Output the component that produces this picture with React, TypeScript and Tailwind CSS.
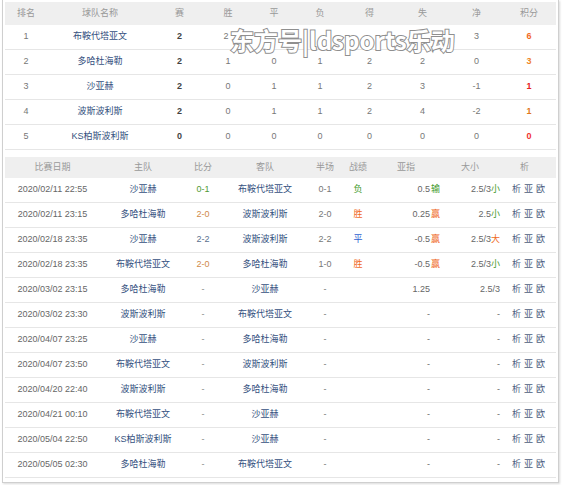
import React from "react";

const FONT = { fontFamily: '"Liberation Sans","Noto Sans CJK SC",sans-serif' };

const standings = [
  { r: "1", n: "布鞍代塔亚文", p: "2", w: "2", d: "", l: "", f: "", a: "", g: "3", pts: "6", pc: "text-[#f26a1f]" },
  { r: "2", n: "多哈杜海勒", p: "2", w: "1", d: "0", l: "1", f: "2", a: "2", g: "0", pts: "3", pc: "text-[#f0842a]" },
  { r: "3", n: "沙亚赫", p: "2", w: "0", d: "1", l: "1", f: "2", a: "3", g: "-1", pts: "1", pc: "text-[#e52222]" },
  { r: "4", n: "波斯波利斯", p: "2", w: "0", d: "1", l: "1", f: "2", a: "4", g: "-2", pts: "1", pc: "text-[#e0761e]" },
  { r: "5", n: "KS柏斯波利斯", p: "0", w: "0", d: "0", l: "0", f: "0", a: "0", g: "0", pts: "0", pc: "text-[#f03232]" },
];

type M = {
  date: string; home: string; score: string; sc: string; away: string; half: string;
  res?: string; rc?: string; hcp: string; hr?: string; hrc?: string; ou: string; our?: string; ourc?: string;
};

const G = "text-[#3f9a2c]";
const O = "text-[#ef6a1e]";

const matches: M[] = [
  { date: "2020/02/11 22:55", home: "沙亚赫", score: "0-1", sc: "text-[#4f9a35]", away: "布鞍代塔亚文", half: "0-1", res: "负", rc: G, hcp: "0.5", hr: "输", hrc: G, ou: "2.5/3", our: "小", ourc: G },
  { date: "2020/02/11 23:15", home: "多哈杜海勒", score: "2-0", sc: "text-[#d0894a]", away: "波斯波利斯", half: "2-0", res: "胜", rc: O, hcp: "0.25", hr: "赢", hrc: O, ou: "2.5", our: "小", ourc: G },
  { date: "2020/02/18 23:35", home: "沙亚赫", score: "2-2", sc: "text-[#5b6f8f]", away: "波斯波利斯", half: "2-2", res: "平", rc: "text-[#2f5fd0]", hcp: "-0.5", hr: "赢", hrc: O, ou: "2.5/3", our: "大", ourc: O },
  { date: "2020/02/18 23:35", home: "布鞍代塔亚文", score: "2-0", sc: "text-[#d0894a]", away: "多哈杜海勒", half: "1-0", res: "胜", rc: O, hcp: "-0.5", hr: "赢", hrc: O, ou: "2.5/3", our: "小", ourc: G },
  { date: "2020/03/02 23:15", home: "多哈杜海勒", score: "-", sc: "text-[#888]", away: "沙亚赫", half: "-", hcp: "1.25", ou: "2.5/3" },
  { date: "2020/03/02 23:30", home: "波斯波利斯", score: "-", sc: "text-[#888]", away: "布鞍代塔亚文", half: "-", hcp: "-", ou: "-" },
  { date: "2020/04/07 23:25", home: "沙亚赫", score: "-", sc: "text-[#888]", away: "多哈杜海勒", half: "-", hcp: "-", ou: "-" },
  { date: "2020/04/07 23:50", home: "布鞍代塔亚文", score: "-", sc: "text-[#888]", away: "波斯波利斯", half: "-", hcp: "-", ou: "-" },
  { date: "2020/04/20 22:40", home: "波斯波利斯", score: "-", sc: "text-[#888]", away: "多哈杜海勒", half: "-", hcp: "-", ou: "-" },
  { date: "2020/04/21 00:10", home: "布鞍代塔亚文", score: "-", sc: "text-[#888]", away: "沙亚赫", half: "-", hcp: "-", ou: "-" },
  { date: "2020/05/04 22:50", home: "KS柏斯波利斯", score: "-", sc: "text-[#888]", away: "沙亚赫", half: "-", hcp: "-", ou: "-" },
  { date: "2020/05/05 02:30", home: "多哈杜海勒", score: "-", sc: "text-[#888]", away: "布鞍代塔亚文", half: "-", hcp: "-", ou: "-" },
];

const c = "flex items-center justify-center";

export default function App() {
  return (
    <div className="w-[564px] h-[485px] bg-white relative overflow-hidden text-[9px] text-[#777]" style={FONT}>
      <div className="ml-[2px] w-[557px] h-[483px] border-l border-r border-b border-[#cfcfcf] shadow-[1px_1px_2px_rgba(0,0,0,0.15)] px-[2px] pt-[2px]">
        {/* standings */}
        <div className="grid grid-cols-[42px_106px_53px_44px_48px_44px_55px_51px_57px_52px] h-[23px] bg-[#efefef] text-[#999]">
          {["排名", "球队名称", "赛", "胜", "平", "负", "得", "失", "净", "积分"].map((h, i) => (
            <div key={i} className={`${c} ${i === 9 ? "pr-[4px]" : ""}`}>{h}</div>
          ))}
        </div>
        {standings.map((s, i) => (
          <div key={i} className="grid grid-cols-[42px_106px_53px_44px_48px_44px_55px_51px_57px_52px] h-[25px] border-b border-[#e6e6e6]">
            <div className={c}>{s.r}</div>
            <div className={`${c} text-[#34507e]`}>{s.n}</div>
            <div className={`${c} font-bold text-[#444]`}>{s.p}</div>
            <div className={`${c} ${i === 0 ? "pr-[4px]" : ""}`}>{s.w}</div>
            <div className={c}>{s.d}</div>
            <div className={c}>{s.l}</div>
            <div className={c}>{s.f}</div>
            <div className={c}>{s.a}</div>
            <div className={c}>{s.g}</div>
            <div className={`${c} pr-[4px] font-bold ${s.pc}`}>{s.pts}</div>
          </div>
        ))}

        {/* matches */}
        <div className="mt-[7px] grid grid-cols-[95px_86px_34px_90px_30px_36px_64px_60px_57px] h-[21px] bg-[#efefef] text-[#999]">
          {["比赛日期", "主队", "比分", "客队", "半场", "战绩", "亚指", "大小", "析"].map((h, i) => (
            <div key={i} className={`${c} ${i === 6 ? "pr-[4px]" : ""} ${i === 8 ? "pr-[8px]" : ""}`}>{h}</div>
          ))}
        </div>
        {matches.map((m, i) => (
          <div key={i} className="grid grid-cols-[95px_86px_34px_90px_30px_36px_64px_60px_57px] h-[25px] border-b border-[#e6e6e6]">
            <div className={`${c} text-[#666]`}>{m.date}</div>
            <div className={`${c} text-[#34507e]`}>{m.home}</div>
            <div className={`${c} ${m.sc}`}>{m.score}</div>
            <div className={`${c} text-[#34507e]`}>{m.away}</div>
            <div className={c}>{m.half}</div>
            <div className={`${c} ${m.rc ?? ""}`}>{m.res ?? ""}</div>
            <div className="flex items-center justify-end gap-[1px] text-[#666]">
              <span>{m.hcp}</span>
              {m.hr ? <span className={m.hrc}>{m.hr}</span> : <span className="w-[9px]" />}
            </div>
            <div className="flex items-center justify-end text-[#666]">
              <span>{m.ou}</span>
              {m.our ? <span className={m.ourc}>{m.our}</span> : null}
            </div>
            <div className="flex items-center justify-center gap-[3px] text-[#4b5d80]">
              <span>析</span><span>亚</span><span>欧</span>
            </div>
          </div>
        ))}
      </div>

      {/* watermark */}
      <div
        className="absolute left-[230px] top-[25px] text-[24px] font-bold leading-[30px] text-white whitespace-nowrap [-webkit-text-stroke:2px_#8f8f8f] [paint-order:stroke_fill]"
        style={{ fontFamily: '"Noto Sans CJK SC","Liberation Sans",sans-serif' }}
      >
        东方号|ldsports乐动
      </div>
    </div>
  );
}
